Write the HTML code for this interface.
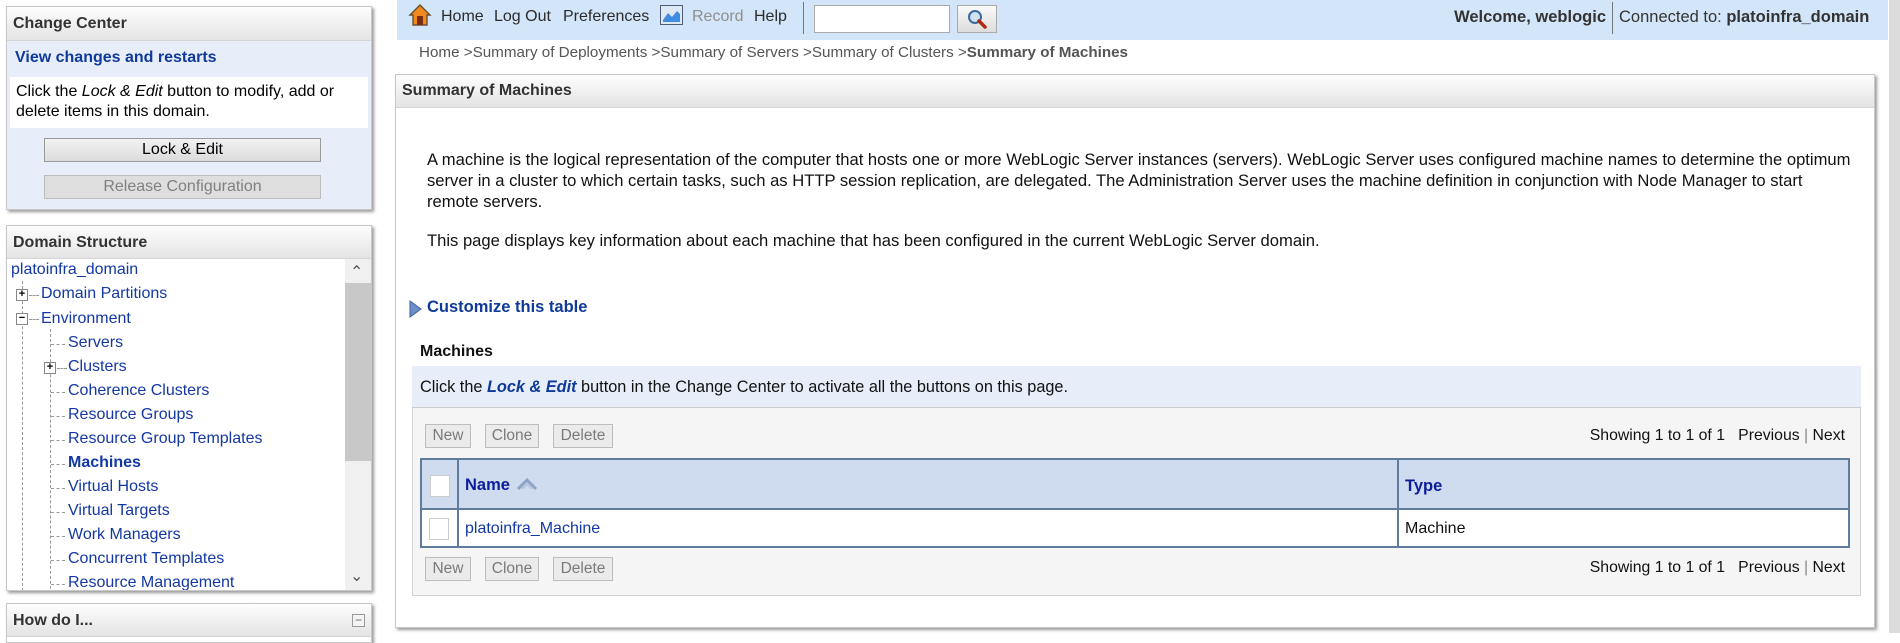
<!DOCTYPE html>
<html><head><meta charset="utf-8">
<style>
*{box-sizing:border-box;margin:0;padding:0}
body{width:1900px;height:633px;overflow:hidden;background:#fff;font-family:"Liberation Sans",Arial,sans-serif;position:relative;color:#000}
.a{position:absolute;white-space:nowrap}
.panel{position:absolute;border:1px solid #c8c8c8;box-shadow:2px 2px 3px #999;background:#fff}
.ph{position:absolute;left:0;right:0;top:0;background:linear-gradient(#fdfdfd,#e4e4e4);border-bottom:1px solid #d4d4d4;font-weight:bold;color:#333;font-size:16px;padding-left:6px}
.tree{font-size:16px;color:#1338a3}
.btn{position:absolute;background:linear-gradient(#f2f2f2,#dcdcdc);border:1px solid #9a9a9a;text-align:center;font-size:16px}
.sb{position:absolute;background:#ebebeb;border:1px solid #bdbdbd;color:#7a7a7a;font-size:15.5px;text-align:center;line-height:22px}
.dash{position:absolute;border-left:1px dashed #999}
.hd{position:absolute;border-top:1px dashed #999;width:14px}
.pm{position:absolute;width:12px;height:12px;border:1px solid #888;background:#fff;font-size:11px;line-height:9px;text-align:center;color:#000;font-weight:bold}
</style></head><body>

<div class="panel" style="left:6px;top:6px;width:366px;height:204px;background:#e7eef9">
 <div class="ph" style="height:34px;line-height:34px">Change Center</div>
 <div class="a" style="left:8px;top:42px;font-weight:bold;color:#0f3a99;font-size:16px">View changes and restarts</div>
 <div class="a" style="left:3px;top:70px;width:358px;height:51px;background:#fff;font-size:16px;line-height:20px;padding:5px 6px;white-space:normal">Click the <i>Lock &amp; Edit</i> button to modify, add or delete items in this domain.</div>
 <div class="btn" style="left:37px;top:131px;width:277px;height:24px;line-height:22px">Lock &amp; Edit</div>
 <div class="btn" style="left:37px;top:168px;width:277px;height:24px;line-height:22px;background:#dedede;border-color:#bdbdbd;color:#808080">Release Configuration</div>
</div>

<div class="panel" style="left:6px;top:225px;width:366px;height:366px;overflow:hidden">
 <div class="ph" style="height:33px;line-height:33px">Domain Structure</div>
 <div class="a" style="left:338px;top:33px;width:26px;height:333px;background:#f0f0f0"></div>
 <div class="a" style="left:338px;top:57px;width:26px;height:178px;background:#c8c8c8"></div>
 <div class="a" style="left:343px;top:36px;font-size:16px;color:#555">&#8963;</div>
 <div class="a" style="left:343px;top:340px;font-size:16px;color:#555">&#8964;</div>
 <div class="tree">
  <div class="a" style="left:4px;top:35px">platoinfra_domain</div>
  <div class="dash" style="left:15px;top:55px;height:320px"></div>
  <div class="pm" style="left:9px;top:63px">+</div><div class="hd" style="left:22px;top:69px;width:10px"></div>
  <div class="a" style="left:34px;top:59px">Domain Partitions</div>
  <div class="pm" style="left:9px;top:87px">&minus;</div><div class="hd" style="left:22px;top:93px;width:10px"></div>
  <div class="a" style="left:34px;top:84px">Environment</div>
  <div class="dash" style="left:43px;top:103px;height:270px"></div>
  <div class="hd" style="left:44px;top:118px"></div><div class="a" style="left:61px;top:108px">Servers</div>
  <div class="pm" style="left:37px;top:136px">+</div><div class="hd" style="left:50px;top:142px;width:10px"></div><div class="a" style="left:61px;top:132px">Clusters</div>
  <div class="hd" style="left:44px;top:166px"></div><div class="a" style="left:61px;top:156px">Coherence Clusters</div>
  <div class="hd" style="left:44px;top:190px"></div><div class="a" style="left:61px;top:180px">Resource Groups</div>
  <div class="hd" style="left:44px;top:214px"></div><div class="a" style="left:61px;top:204px">Resource Group Templates</div>
  <div class="hd" style="left:44px;top:238px"></div><div class="a" style="left:61px;top:228px;font-weight:bold">Machines</div>
  <div class="hd" style="left:44px;top:262px"></div><div class="a" style="left:61px;top:252px">Virtual Hosts</div>
  <div class="hd" style="left:44px;top:286px"></div><div class="a" style="left:61px;top:276px">Virtual Targets</div>
  <div class="hd" style="left:44px;top:310px"></div><div class="a" style="left:61px;top:300px">Work Managers</div>
  <div class="hd" style="left:44px;top:334px"></div><div class="a" style="left:61px;top:324px">Concurrent Templates</div>
  <div class="hd" style="left:44px;top:358px"></div><div class="a" style="left:61px;top:348px">Resource Management</div>
 </div>
</div>

<div class="panel" style="left:6px;top:603px;width:366px;height:40px">
 <div class="ph" style="height:33px;line-height:33px">How do I...</div>
 <div class="a" style="left:345px;top:10px;width:13px;height:13px;border:1px solid #999;background:#f4f4f4;font-size:12px;line-height:10px;text-align:center;color:#666">&minus;</div>
</div>

<div class="a" style="left:397px;top:0;width:1491px;height:40px;background:#d3e5f8"></div>
<svg class="a" style="left:408px;top:3px" width="24" height="24" viewBox="0 0 24 24">
 <path d="M2 12 L12 2 L22 12 L19 12 L19 22 L5 22 L5 12 Z" fill="#f08a1e" stroke="#6b5030" stroke-width="1.4"/>
 <rect x="9" y="13" width="6" height="9" fill="#7a2c10"/>
</svg>
<div class="a" style="left:441px;top:8px;font-size:16px;color:#2b2b2b">Home</div>
<div class="a" style="left:494px;top:8px;font-size:16px;color:#2b2b2b">Log Out</div>
<div class="a" style="left:563px;top:8px;font-size:16px;color:#2b2b2b">Preferences</div>
<svg class="a" style="left:660px;top:5px" width="23" height="20" viewBox="0 0 23 20">
 <rect x="0.5" y="0.5" width="22" height="19" fill="#dfe9f5" stroke="#4d5d78"/>
 <path d="M3 15 L8 8 L12 12 L17 6 L20 9 L20 17 L3 17 Z" fill="#3f8de0"/>
</svg>
<div class="a" style="left:692px;top:8px;font-size:16px;color:#8e8e8e">Record</div>
<div class="a" style="left:754px;top:8px;font-size:16px;color:#2b2b2b">Help</div>
<div class="a" style="left:803px;top:2px;width:1px;height:32px;background:#777"></div>
<div class="a" style="left:814px;top:5px;width:136px;height:28px;background:#fff;border:1px solid #aaa"></div>
<div class="a" style="left:957px;top:5px;width:40px;height:28px;background:linear-gradient(#fafafa,#ddd);border:1px solid #aaa"></div>
<svg class="a" style="left:966px;top:8px" width="22" height="22" viewBox="0 0 22 22">
 <circle cx="9" cy="9" r="6" fill="#cfe3f5" stroke="#3b6a9a" stroke-width="2"/>
 <path d="M13 13 L19 19" stroke="#b02a10" stroke-width="3.5" stroke-linecap="round"/>
</svg>
<div class="a" style="right:294px;top:8px;font-size:16.5px;font-weight:bold;color:#333">Welcome, weblogic</div>
<div class="a" style="left:1612px;top:2px;width:1px;height:32px;background:#777"></div>
<div class="a" style="left:1619px;top:8px;font-size:16.5px;color:#333">Connected to: <b>platoinfra_domain</b></div>
<div class="a" style="left:1889px;top:0;width:11px;height:633px;background:#dcdcdc"></div>

<div class="a" style="left:419px;top:44px;font-size:15.2px;color:#555">Home &gt;Summary of Deployments &gt;Summary of Servers &gt;Summary of Clusters &gt;<b>Summary of Machines</b></div>

<div class="panel" style="left:395px;top:74px;width:1480px;height:554px">
 <div class="ph" style="height:33px;line-height:31px;font-size:16px">Summary of Machines</div>
</div>
<div class="a" style="left:427px;top:149px;font-size:16.6px;line-height:21px;color:#111">A machine is the logical representation of the computer that hosts one or more WebLogic Server instances (servers). WebLogic Server uses configured machine names to determine the optimum<br>server in a cluster to which certain tasks, such as HTTP session replication, are delegated. The Administration Server uses the machine definition in conjunction with Node Manager to start<br>remote servers.</div>
<div class="a" style="left:427px;top:231px;font-size:16.6px;color:#111">This page displays key information about each machine that has been configured in the current WebLogic Server domain.</div>

<svg class="a" style="left:409px;top:300px" width="14" height="18" viewBox="0 0 14 18"><path d="M1 1 L12 9 L1 17 Z" fill="#6d8fc7" stroke="#3d5e99"/></svg>
<div class="a" style="left:427px;top:298px;font-size:16.5px;font-weight:bold;color:#0f3a99">Customize this table</div>
<div class="a" style="left:420px;top:343px;font-size:16px;font-weight:bold;color:#111">Machines</div>

<div class="a" style="left:412px;top:366px;width:1449px;height:42px;background:#e7eef9;border-bottom:1px solid #ccc"></div>
<div class="a" style="left:420px;top:378px;font-size:16.3px;color:#111">Click the <b><i style="color:#0f3a99">Lock &amp; Edit</i></b> button in the Change Center to activate all the buttons on this page.</div>

<div class="a" style="left:412px;top:408px;width:1449px;height:188px;background:#f5f5f5;border:1px solid #d2d2d2;border-top:none"></div>
<div class="sb" style="left:425px;top:424px;width:46px;height:24px">New</div>
<div class="sb" style="left:485px;top:424px;width:54px;height:24px">Clone</div>
<div class="sb" style="left:553px;top:424px;width:60px;height:24px">Delete</div>
<div class="a" style="right:55px;top:427px;font-size:15.8px;color:#111">Showing 1 to 1 of 1 &nbsp;&nbsp;Previous <span style="color:#888">|</span> Next</div>

<div class="a" style="left:420px;top:458px;width:1430px;height:90px;border:2px solid #5f7c9c;background:#fff"></div>
<div class="a" style="left:422px;top:460px;width:1426px;height:50px;background:#cfdcef;border-bottom:2px solid #5f7c9c"></div>
<div class="a" style="left:457px;top:460px;width:2px;height:86px;background:#5f7c9c"></div>
<div class="a" style="left:1397px;top:460px;width:2px;height:86px;background:#5f7c9c"></div>
<div class="a" style="left:430px;top:475px;width:20px;height:22px;background:#fff;border:1px solid #ccc"></div>
<div class="a" style="left:465px;top:476px;font-size:16.5px;font-weight:bold;color:#0c1d9a">Name</div>
<svg class="a" style="left:516px;top:476px" width="22" height="16" viewBox="0 0 22 16"><path d="M2 13 L11 4 L20 13" fill="none" stroke="#8ea3c8" stroke-width="3"/><path d="M6 13 L11 8 L16 13" fill="none" stroke="#b7c6de" stroke-width="2"/></svg>
<div class="a" style="left:1405px;top:477px;font-size:16.5px;font-weight:bold;color:#0c1d9a">Type</div>
<div class="a" style="left:429px;top:518px;width:20px;height:22px;background:#fff;border:1px solid #ccc"></div>
<div class="a" style="left:465px;top:520px;font-size:16px;color:#1338a3">platoinfra_Machine</div>
<div class="a" style="left:1405px;top:520px;font-size:16px;color:#111">Machine</div>

<div class="sb" style="left:425px;top:557px;width:46px;height:24px">New</div>
<div class="sb" style="left:485px;top:557px;width:54px;height:24px">Clone</div>
<div class="sb" style="left:553px;top:557px;width:60px;height:24px">Delete</div>
<div class="a" style="right:55px;top:559px;font-size:15.8px;color:#111">Showing 1 to 1 of 1 &nbsp;&nbsp;Previous <span style="color:#888">|</span> Next</div>
</body></html>
